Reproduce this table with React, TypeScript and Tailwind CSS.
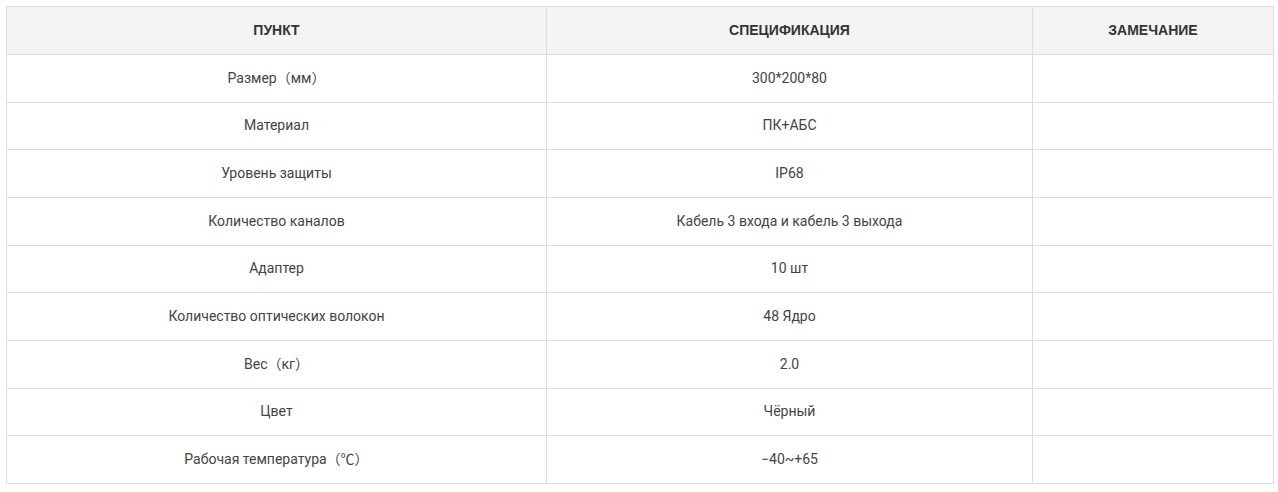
const ROWS: [string, string][] = [
  ['Размер（мм）', '300*200*80'],
  ['Материал', 'ПК+АБС'],
  ['Уровень защиты', 'IP68'],
  ['Количество каналов', 'Кабель 3 входа и кабель 3 выхода'],
  ['Адаптер', '10 шт'],
  ['Количество оптических волокон', '48 Ядро'],
  ['Вес（кг）', '2.0'],
  ['Цвет', 'Чёрный'],
  ['Рабочая температура（℃）', '−40~+65'],
];

export default function App() {
  return (
    <div className="bg-white px-[6px] pt-[6px]" style={{ fontFamily: 'Roboto, "Noto Sans CJK SC", sans-serif' }}>
      <table className="w-[1267px] border-collapse table-fixed text-[14px] text-[#444]">
        <colgroup>
          <col className="w-[540px]" />
          <col className="w-[486px]" />
          <col className="w-[241px]" />
        </colgroup>
        <thead>
          <tr className="bg-[#f4f4f4] h-[48px] font-['Liberation_Sans',Arial,sans-serif]">
            <th className="border border-[#dddddd] text-center font-bold text-[14px] text-[#333]">ПУНКТ</th>
            <th className="border border-[#dddddd] text-center font-bold text-[14px] text-[#333]">СПЕЦИФИКАЦИЯ</th>
            <th className="border border-[#dddddd] text-center font-bold text-[14px] text-[#333]">ЗАМЕЧАНИЕ</th>
          </tr>
        </thead>
        <tbody>
          {ROWS.map(([item, spec]) => (
            <tr key={item} className="h-[47.67px]">
              <td className="border border-[#dddddd] text-center">{item}</td>
              <td className="border border-[#dddddd] text-center">{spec}</td>
              <td className="border border-[#dddddd]"></td>
            </tr>
          ))}
        </tbody>
      </table>
    </div>
  );
}
